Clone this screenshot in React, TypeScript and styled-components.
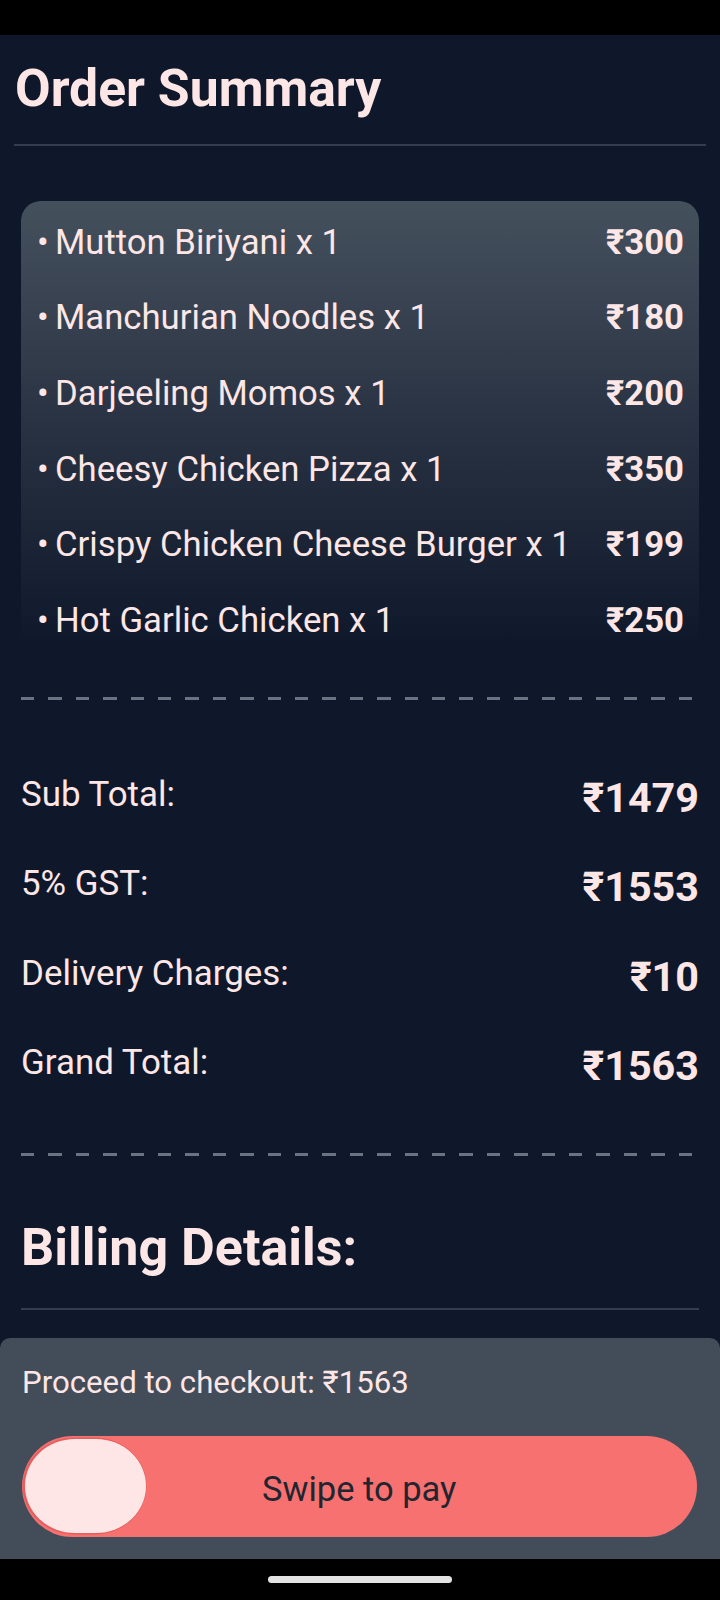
import React from "react";
import styled, { createGlobalStyle } from "styled-components";

const GlobalStyle = createGlobalStyle`
  html, body {
    margin: 0;
    padding: 0;
    background: #0f172a;
  }
  * { box-sizing: border-box; }
  body {
    font-family: Roboto, "Noto Sans", "DejaVu Sans", sans-serif;
    color: #fde6e6;
  }
`;

const Screen = styled.div`
  width: 720px;
  height: 1600px;
  display: flex;
  flex-direction: column;
  background: #0f172a;
  overflow: hidden;
`;

const StatusBar = styled.div`
  height: 35px;
  flex: none;
  background: #000;
`;

const Main = styled.main`
  flex: 1;
  display: flex;
  flex-direction: column;
  background: #0f172a;
`;

const Header = styled.header`
  padding: 23px 14px 0;
`;

const Title = styled.h1`
  margin: 0;
  font-size: 51.7px;
  line-height: 62px;
  font-weight: 700;
  color: #fde6e6;
  padding-left: 1px;
`;

const Divider = styled.hr<{ $mt: number }>`
  margin: ${(p) => p.$mt}px 0 0;
  border: none;
  height: 2px;
  background: #333d4d;
`;

const Content = styled.section`
  padding: 0 21px;
  display: flex;
  flex-direction: column;
`;

const ItemsCard = styled.ul`
  list-style: none;
  margin: 55px 0 0;
  height: 443px;
  overflow: hidden;
  padding: 3px 15px 0 14px;
  border-radius: 20px 20px 0 0;
  background: linear-gradient(180deg, #45505d 0%, #2a3343 49%, #111a2c 97%, #0f172a 100%);
`;

const ItemRow = styled.li`
  display: flex;
  justify-content: space-between;
  align-items: center;
  height: 75.7px;
  font-size: 34.7px;
  line-height: 1.17;
  white-space: nowrap;
`;

const ItemName = styled.span`
  font-weight: 400;
`;

const Bullet = styled.span`
  display: inline-block;
  width: 20px;
  padding-left: 2px;
`;

const Price = styled.span`
  font-weight: 700;
`;

const DashedRule = styled.div<{ $mt: number }>`
  margin-top: ${(p) => p.$mt}px;
  height: 3px;
  background: repeating-linear-gradient(
    to right,
    #6b7383 0px,
    #6b7383 13.4px,
    transparent 13.4px,
    transparent 27.4px
  );
`;

const Totals = styled.div`
  margin-top: 75px;
  display: flex;
  flex-direction: column;
  gap: 42.3px;
`;

const TotalRow = styled.div`
  display: flex;
  justify-content: space-between;
  align-items: flex-start;
  height: 47px;
`;

const TotalLabel = styled.span`
  font-size: 34.9px;
  line-height: 40px;
  font-weight: 400;
`;

const TotalValue = styled.span`
  font-size: 41.3px;
  line-height: 47px;
  font-weight: 700;
`;

const SectionTitle = styled.h2`
  margin: 61px 0 0;
  font-size: 52px;
  line-height: 62px;
  font-weight: 700;
  color: #fde6e6;
`;

const Sheet = styled.footer`
  flex: none;
  background: #434d59;
  border-radius: 10px 10px 0 0;
  padding: 27px 23px 22px 22px;
  display: flex;
  flex-direction: column;
`;

const CheckoutText = styled.p`
  margin: 0;
  font-size: 31.2px;
  line-height: 36px;
  color: #fde6e6;
`;

const SwipeTrack = styled.div`
  margin-top: 35px;
  height: 101px;
  border-radius: 51px;
  background: #f87171;
  padding: 3px 3px 4px 2.5px;
  display: grid;
  grid-template-areas: "cell";
  align-items: center;
`;

const Thumb = styled.div`
  grid-area: cell;
  justify-self: start;
  width: 121px;
  height: 94px;
  border-radius: 50px / 47px;
  background: #fee6e6;
  box-shadow: -1px 0 0 1.5px #e45f5f;
`;

const SwipeLabel = styled.span`
  grid-area: cell;
  justify-self: center;
  font-size: 34.5px;
  padding-top: 6px;
  color: #1f2630;
`;

const NavBar = styled.div`
  height: 41px;
  flex: none;
  background: #000;
  display: flex;
  justify-content: center;
  padding-top: 17px;
`;

const HomePill = styled.div`
  width: 184px;
  height: 7px;
  border-radius: 4px;
  background: #e3e3e3;
`;

const items = [
  { name: "Mutton Biriyani x 1", price: 300 },
  { name: "Manchurian Noodles x 1", price: 180 },
  { name: "Darjeeling Momos x 1", price: 200 },
  { name: "Cheesy Chicken Pizza x 1", price: 350 },
  { name: "Crispy Chicken Cheese Burger x 1", price: 199 },
  { name: "Hot Garlic Chicken x 1", price: 250 },
];

const totals = [
  { label: "Sub Total:", value: "₹1479" },
  { label: "5% GST:", value: "₹1553" },
  { label: "Delivery Charges:", value: "₹10" },
  { label: "Grand Total:", value: "₹1563" },
];

export default function App() {
  return (
    <>
      <GlobalStyle />
      <Screen>
        <StatusBar />
        <Main>
          <Header>
            <Title>Order Summary</Title>
            <Divider $mt={24} />
          </Header>
          <Content>
            <ItemsCard>
              {items.map((it) => (
                <ItemRow key={it.name}>
                  <ItemName>
                    <Bullet>•</Bullet>
                    {it.name}
                  </ItemName>
                  <Price>₹{it.price}</Price>
                </ItemRow>
              ))}
            </ItemsCard>
            <DashedRule $mt={53} />
            <Totals>
              {totals.map((t) => (
                <TotalRow key={t.label}>
                  <TotalLabel>{t.label}</TotalLabel>
                  <TotalValue>{t.value}</TotalValue>
                </TotalRow>
              ))}
            </Totals>
            <DashedRule $mt={63.6} />
            <SectionTitle>Billing Details:</SectionTitle>
            <Divider $mt={29} />
          </Content>
        </Main>
        <Sheet>
          <CheckoutText>Proceed to checkout: ₹1563</CheckoutText>
          <SwipeTrack>
            <Thumb />
            <SwipeLabel>Swipe to pay</SwipeLabel>
          </SwipeTrack>
        </Sheet>
        <NavBar>
          <HomePill />
        </NavBar>
      </Screen>
    </>
  );
}
